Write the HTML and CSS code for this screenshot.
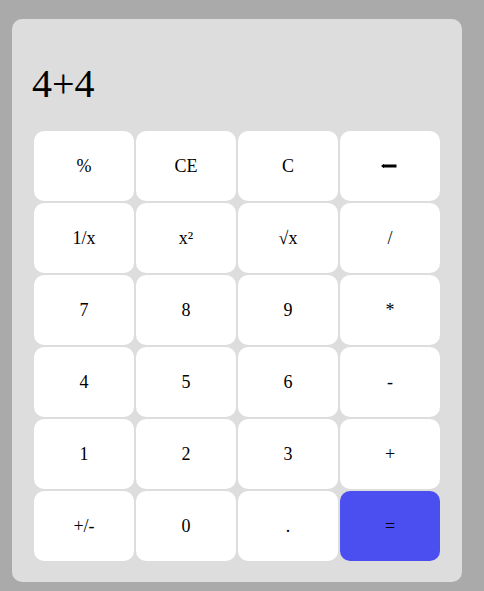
FILE: index.html
```html
<!DOCTYPE html>
<html>
<head>
<meta charset="utf-8">
<link rel="stylesheet" href="styles.css">
</head>
<body>
<div class="calc">
  <div class="display">4+4</div>
  <div class="keys">
    <button class="key">%</button>
    <button class="key">CE</button>
    <button class="key">C</button>
    <button class="key" aria-label="Backspace"><svg class="back" width="16" height="6" viewBox="0 0 16 6"><rect x="2.5" y="1.5" width="13" height="3" fill="#000"/><path d="M0 3 L3 0.8 L3 5.2 Z" fill="#000"/></svg></button>
    <button class="key">1/x</button>
    <button class="key">x²</button>
    <button class="key">√x</button>
    <button class="key">/</button>
    <button class="key">7</button>
    <button class="key">8</button>
    <button class="key">9</button>
    <button class="key">*</button>
    <button class="key">4</button>
    <button class="key">5</button>
    <button class="key">6</button>
    <button class="key">-</button>
    <button class="key">1</button>
    <button class="key">2</button>
    <button class="key">3</button>
    <button class="key">+</button>
    <button class="key">+/-</button>
    <button class="key">0</button>
    <button class="key">.</button>
    <button class="key key-eq">=</button>
  </div>
</div>
</body>
</html>
```
FILE: styles.css
```css
html, body {
  margin: 0;
  padding: 0;
  background: #a9aaa9;
  font-family: "Liberation Serif", serif;
}
body {
  padding: 19px 0 0 12px;
}
.calc {
  width: 450px;
  box-sizing: border-box;
  background: #dddddd;
  border-radius: 10px;
  padding: 20px 20px 19px;
}
.display {
  font-size: 40px;
  line-height: 44px;
  padding: 23px 0 23px 0;
  color: #000;
}
.keys {
  display: grid;
  grid-template-columns: repeat(4, 100px);
  grid-auto-rows: 70px;
  gap: 2px;
  padding: 2px;
}
.key {
  border: none;
  border-radius: 10px;
  background: #ffffff;
  font-family: "Liberation Serif", serif;
  font-size: 18px;
  color: #000;
  padding: 0;
  margin: 0;
  display: flex;
  align-items: center;
  justify-content: center;
}
.back {
  display: block;
  margin-right: 3px;
}
.key-eq {
  background: #4b4ff0;
}
```
